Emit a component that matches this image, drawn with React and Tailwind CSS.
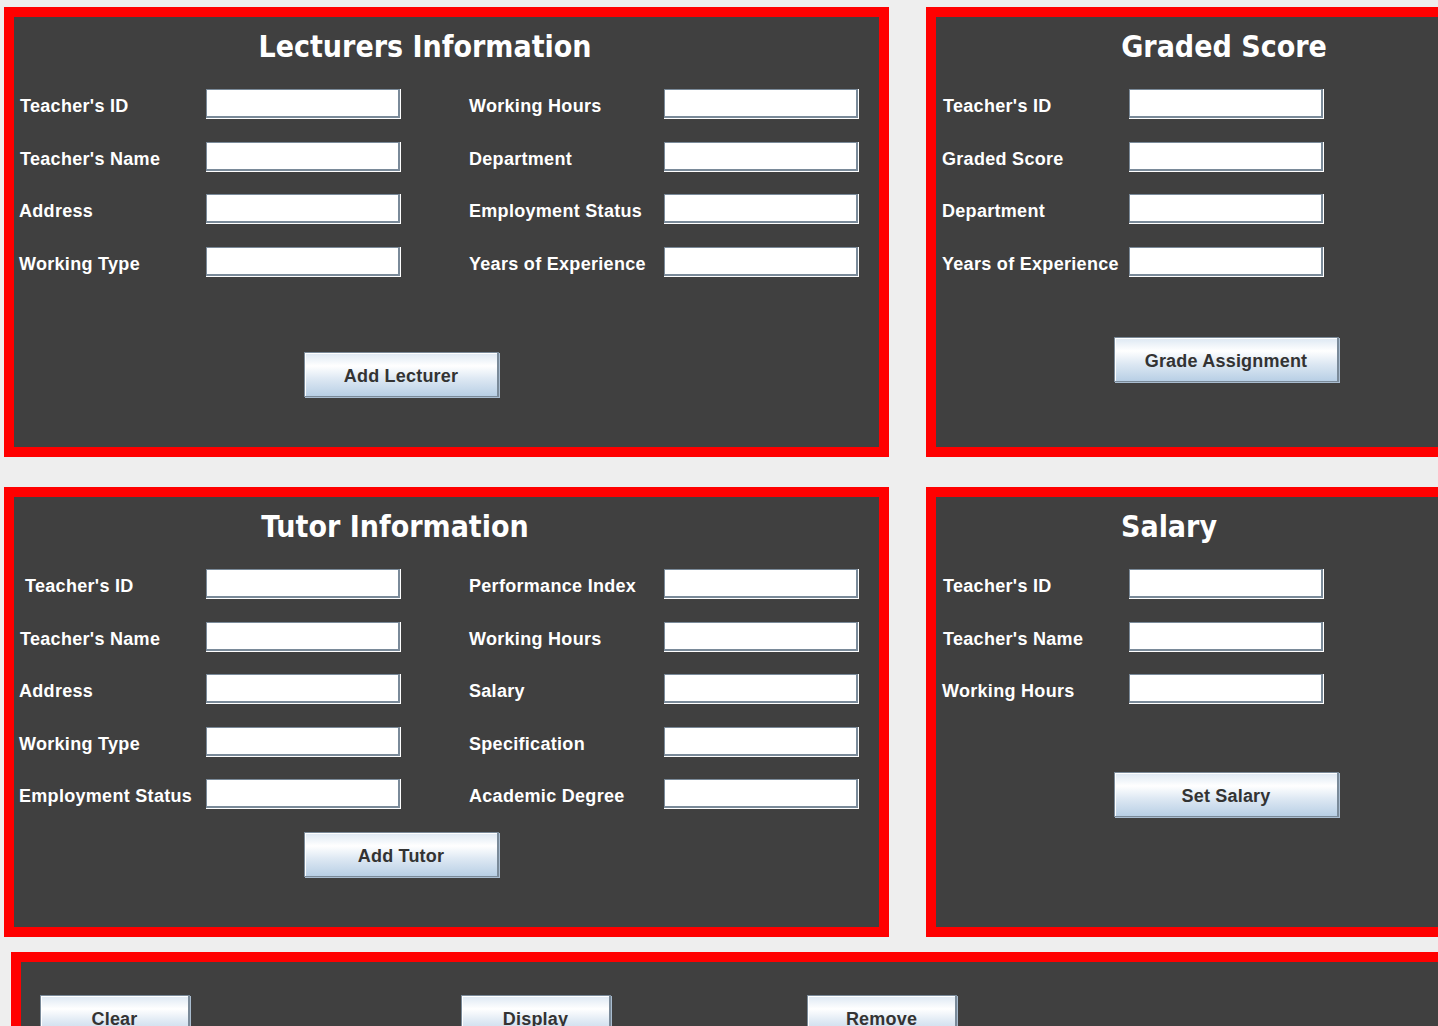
import React from "react";

const LABEL = "text-white font-bold text-[18px] leading-[22px] tracking-[0.3px] pt-[4px] font-['Liberation_Sans',Arial,sans-serif] whitespace-nowrap";
const TITLE = "text-white font-bold text-[30px] leading-[36px] font-['DejaVu_Sans_Condensed','DejaVu_Sans',sans-serif] text-center whitespace-nowrap";

function Field() {
  return (
    <div className="w-[195px] h-[30px] shrink-0 border-r border-b border-white">
      <div className="w-full h-full bg-white border border-[#7a8a99] border-r-2 border-b-2" />
    </div>
  );
}

function Btn({ children, w }) {
  return (
    <div
      className={`${w} h-[45px] shrink-0 flex items-center justify-center pt-[4px] border border-[#7a8a99] border-r-2 bg-[linear-gradient(180deg,#dde8f3_0%,#ffffff_30%,#dde8f3_60%,#b8cfe5_100%)] shadow-[inset_1px_1px_0_#ffffff,1px_1px_0_#a9bccf] text-[#333333] font-bold text-[18px] tracking-[0.2px] font-['Liberation_Sans',Arial,sans-serif]`}
    >
      {children}
    </div>
  );
}

function Row({ left, right, mt, lpad = "pl-[6px]", rightCol = true }) {
  return (
    <div className={`flex items-center h-[30px] ${mt}`}>
      <div className="w-[455px] flex items-center shrink-0">
        <div className={`w-[192px] ${lpad} ${LABEL}`}>{left}</div>
        <Field />
      </div>
      {rightCol && (
        <div className="flex items-center">
          <div className={`w-[195px] ${LABEL}`}>{right}</div>
          <Field />
        </div>
      )}
    </div>
  );
}

function SideRow({ label, mt, lpad = "pl-[7px]" }) {
  return (
    <div className={`flex items-center h-[30px] ${mt}`}>
      <div className={`w-[193px] ${lpad} ${LABEL}`}>{label}</div>
      <Field />
    </div>
  );
}

function Panel({ children, className = "" }) {
  return (
    <div className={`w-[885px] h-[450px] shrink-0 border-[10px] border-[#ff0000] bg-[#404040] ${className}`}>
      {children}
    </div>
  );
}

export default function App() {
  return (
    <div className="w-[1438px] h-[1026px] overflow-hidden bg-[#eeeeee] pl-[4px] pt-[7px]">
      {/* Row 1 */}
      <div className="flex gap-[37px]">
        <Panel>
          <div className={`w-[822px] mt-[12px] ${TITLE}`}>Lecturers Information</div>
          <Row left="Teacher's ID" right="Working Hours" mt="mt-[24px]" />
          <Row left="Teacher's Name" right="Department" mt="mt-[23px]" />
          <Row left="Address" right="Employment Status" mt="mt-[22px]" lpad="pl-[5px]" />
          <Row left="Working Type" right="Years of Experience" mt="mt-[23px]" lpad="pl-[5px]" />
          <div className="mt-[75px] pl-[290px] flex">
            <Btn w="w-[195px]">Add Lecturer</Btn>
          </div>
        </Panel>
        <Panel>
          <div className={`w-[576px] mt-[12px] ${TITLE}`}>Graded Score</div>
          <SideRow label="Teacher's ID" mt="mt-[24px]" />
          <SideRow label="Graded Score" mt="mt-[23px]" lpad="pl-[6px]" />
          <SideRow label="Department" mt="mt-[22px]" lpad="pl-[6px]" />
          <SideRow label="Years of Experience" mt="mt-[23px]" lpad="pl-[6px]" />
          <div className="mt-[60px] pl-[178px] flex">
            <Btn w="w-[225px]">Grade Assignment</Btn>
          </div>
        </Panel>
      </div>

      {/* Row 2 */}
      <div className="flex gap-[37px] mt-[30px]">
        <Panel>
          <div className={`w-[762px] mt-[12px] ${TITLE}`}>Tutor Information</div>
          <Row left="Teacher's ID" right="Performance Index" mt="mt-[24px]" lpad="pl-[11px]" />
          <Row left="Teacher's Name" right="Working Hours" mt="mt-[23px]" />
          <Row left="Address" right="Salary" mt="mt-[22px]" lpad="pl-[5px]" />
          <Row left="Working Type" right="Specification" mt="mt-[23px]" lpad="pl-[5px]" />
          <Row left="Employment Status" right="Academic Degree" mt="mt-[22px]" lpad="pl-[5px]" />
          <div className="mt-[23px] pl-[290px] flex">
            <Btn w="w-[195px]">Add Tutor</Btn>
          </div>
        </Panel>
        <Panel>
          <div className={`w-[466px] mt-[12px] ${TITLE}`}>Salary</div>
          <SideRow label="Teacher's ID" mt="mt-[24px]" />
          <SideRow label="Teacher's Name" mt="mt-[23px]" />
          <SideRow label="Working Hours" mt="mt-[22px]" lpad="pl-[6px]" />
          <div className="mt-[68px] pl-[178px] flex">
            <Btn w="w-[225px]">Set Salary</Btn>
          </div>
        </Panel>
      </div>

      {/* Bottom panel */}
      <div className="ml-[7px] mt-[15px] w-[1500px] h-[200px] border-[10px] border-[#ff0000] bg-[#404040]">
        <div className="flex pt-[33px] pl-[19px]">
          <Btn w="w-[150px]">Clear</Btn>
          <div className="ml-[271px]">
            <Btn w="w-[150px]">Display</Btn>
          </div>
          <div className="ml-[196px]">
            <Btn w="w-[150px]">Remove</Btn>
          </div>
        </div>
      </div>
    </div>
  );
}
